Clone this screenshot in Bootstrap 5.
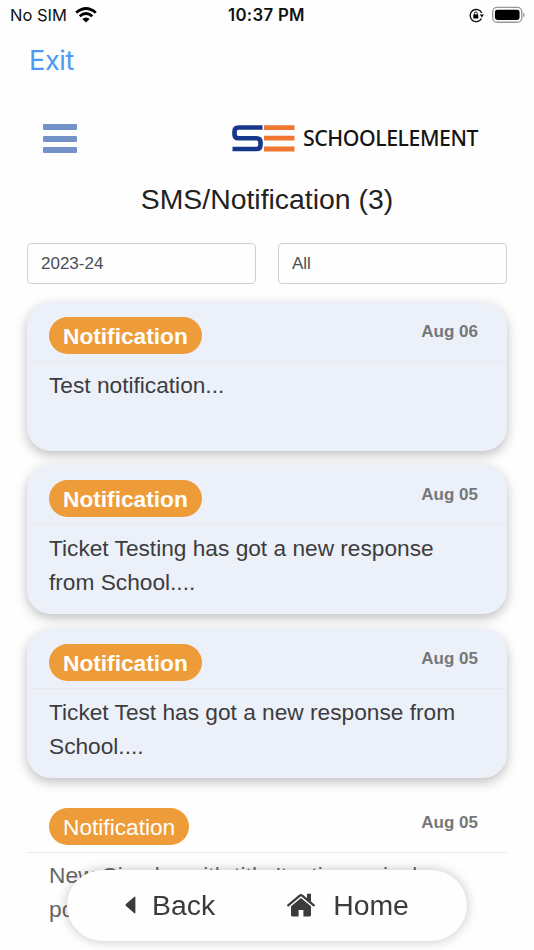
<!DOCTYPE html>
<html lang="en">
<head>
<meta charset="utf-8">
<meta name="viewport" content="width=device-width, initial-scale=1">
<title>SMS/Notification</title>
<link href="https://cdn.jsdelivr.net/npm/bootstrap@5.3.0/dist/css/bootstrap.min.css" rel="stylesheet">
<style>
body{font-family:"Liberation Sans",Arial,sans-serif;background:#fefefe;color:#3c3c3e;height:950px;overflow:hidden}
.status-bar{height:30px;font-family:Inter,sans-serif;font-size:16.5px;color:#111;padding:0 9px 0 10px;line-height:30px}
.status-side{width:150px}
.status-time{font-weight:600;font-size:16.8px;letter-spacing:.3px;margin-right:2px}
.exit-row{height:70px;padding-left:29px;font-family:Inter,sans-serif;font-size:27px;line-height:61px;letter-spacing:-.3px}
.exit-row a{color:#4a9af5}
.brand-row{height:77px;padding:0 56px 0 43px}
.bars{width:34px;height:29px}
.bars span{height:6px;border-radius:1px;background:#7292c8}
.brand-name{font-family:"Noto Sans",sans-serif;font-weight:500;font-size:21.3px;color:#151515;line-height:30px;letter-spacing:-.45px;position:relative;top:-1px}
.page-title{font-size:28.4px;line-height:45px;color:#222;height:66px}
.filters{padding:0 27px;gap:22px;height:41px}
.filters .form-control{border:1.5px solid #ccd2da;border-radius:4px;font-size:17px;color:#495057;padding:0 13px;height:41px;background:#fefefe}
.notices{padding:17.6px 27px 0;gap:14.8px}
.notice{height:149px;border:0;border-radius:24px;background:#ecf1f9;box-shadow:0 4px 12px rgba(0,0,0,.25);color:inherit}
.notice-head{height:60px;padding:15px 29px 0 22px;border-bottom:1px solid #e7eaee}
.tag{height:37px;line-height:38px;padding:0 14px;border-radius:19px;background:#ee9c39;color:#fff;font-size:22.7px;font-weight:700}
.date{font-size:17px;font-weight:700;color:#777;line-height:29px}
.notice-text{font-size:22.7px;line-height:34px;padding:6px 22px 0}
.notice.read{background:transparent;box-shadow:none;border-radius:0}
.read .tag{font-weight:400}
.read .notice-head{border-color:#e7e8ea}
.read .notice-text{color:#666;padding-top:5px;letter-spacing:.12px}
.bottom-nav{left:67px;width:400px;bottom:9px;height:71px;border-radius:36px;background:#fefefe;box-shadow:0 0 12px rgba(0,0,0,.23);font-size:28.4px;color:#3b3b3d;padding-left:58px}
.bottom-nav a{color:inherit}
.home-link{margin-left:72px;gap:18px}
</style>
<script src="https://cdn.jsdelivr.net/npm/bootstrap@5.3.0/dist/js/bootstrap.bundle.min.js"></script>
</head>
<body>
<div class="status-bar d-flex justify-content-between align-items-center">
  <div class="status-side d-flex align-items-center gap-2"><span class="carrier">No SIM</span>
    <svg width="22" height="16" viewBox="0 0 22 16" fill="none" stroke="#000" stroke-width="2.8"><path d="M1.2 5.7Q11-2.6 20.8 5.7M4.7 9.2Q11 3.7 17.3 9.2"/><path d="M7.3 12Q11 9 14.7 12L11 15.6Z" fill="#000" stroke="none"/></svg>
  </div>
  <span class="status-time text-nowrap">10:37 PM</span>
  <div class="status-side d-flex align-items-center justify-content-end">
    <svg class="me-2" width="15" height="15" viewBox="0 0 15 15"><path d="M12.6 10.5A6.1 6.1 0 1 1 12.8 5" fill="none" stroke="#111" stroke-width="1.4"/><path d="M10.8 6.5h4.2l-2.1 3z"/><rect x="4.3" y="6.6" width="5" height="4" rx=".5"/><path d="M5.4 7V5.4a1.4 1.4 0 0 1 2.8 0V7" fill="none" stroke="#111"/></svg>
    <svg width="33" height="18" viewBox="0 0 34 18"><rect x=".7" y="1.2" width="30" height="15.3" rx="4.5" fill="none" stroke="#999" stroke-width="1.4"/><rect x="3" y="3.5" width="25.4" height="10.7" rx="2.5"/><path d="M32.2 6.5q3 2.5 0 5z" fill="#999"/></svg>
  </div>
</div>
<div class="exit-row"><a href="#" class="text-decoration-none">Exit</a></div>
<header class="brand-row d-flex align-items-center justify-content-between">
  <div class="bars d-flex flex-column justify-content-between"><span></span><span></span><span></span></div>
  <div class="d-flex align-items-center">
    <svg width="63" height="27" viewBox="0 0 63 27" fill="none"><path d="M30.5 2.5H6.5Q2.5 2.5 2.5 6.5V9.5Q2.5 13.2 6.5 13.2H24.5Q28.5 13.2 28.5 17V20Q28.5 24 24.5 24H.5" stroke="#17388a" stroke-width="4.6"/><path d="M32 2.6H62.5M32 13.2H62.5M32 24H62.5" stroke="#f0772f" stroke-width="4.8"/></svg>
    <span class="brand-name ms-2">SCHOOLELEMENT</span>
  </div>
</header>
<h1 class="page-title text-center fw-normal m-0">SMS/Notification (3)</h1>
<div class="filters d-flex">
  <div class="form-control d-flex align-items-center">2023-24</div>
  <div class="form-control d-flex align-items-center">All</div>
</div>
<main class="notices d-flex flex-column">
  <article class="card notice"><div class="notice-head d-flex justify-content-between"><span class="tag">Notification</span><span class="date">Aug 06</span></div><div class="notice-text">Test notification...</div></article>
  <article class="card notice"><div class="notice-head d-flex justify-content-between"><span class="tag">Notification</span><span class="date">Aug 05</span></div><div class="notice-text">Ticket Testing has got a new response<br>from School....</div></article>
  <article class="card notice"><div class="notice-head d-flex justify-content-between"><span class="tag">Notification</span><span class="date">Aug 05</span></div><div class="notice-text">Ticket Test has got a new response from<br>School....</div></article>
  <article class="card notice read"><div class="notice-head d-flex justify-content-between"><span class="tag">Notification</span><span class="date">Aug 05</span></div><div class="notice-text">New Circular with title 'testing arrival<br>posted....</div></article>
</main>
<nav class="bottom-nav position-fixed d-flex align-items-center">
  <a href="#" class="d-flex align-items-center text-decoration-none"><svg width="11" height="18" viewBox="0 0 11 18"><path d="M10.4 1v16q0 1-1 .3L1 10Q0 9 1 8L9.4.7q1-.7 1 .3z" fill="#3b3b3d"/></svg><span class="ms-3">Back</span></a>
  <a href="#" class="home-link d-flex align-items-center text-decoration-none"><svg width="28" height="24" viewBox="0 0 28 24"><path d="M4 13.2 14 5l10 8.2V22q0 1.4-1.4 1.4H16.4V17h-4.8v6.4H5.4Q4 23.4 4 22z" fill="#3b3b3d"/><path d="M1.2 12.3 12.8 2.6q1.2-1 2.4 0L26.8 12.3" fill="none" stroke="#fefefe" stroke-width="4.6"/><path d="M20 .8h4v8.4l-4-3.4z" fill="#3b3b3d"/><path d="M1.2 12.3 12.8 2.6q1.2-1 2.4 0L26.8 12.3" fill="none" stroke="#3b3b3d" stroke-width="2.3" stroke-linecap="round"/></svg><span>Home</span></a>
</nav>
</body>
</html>
